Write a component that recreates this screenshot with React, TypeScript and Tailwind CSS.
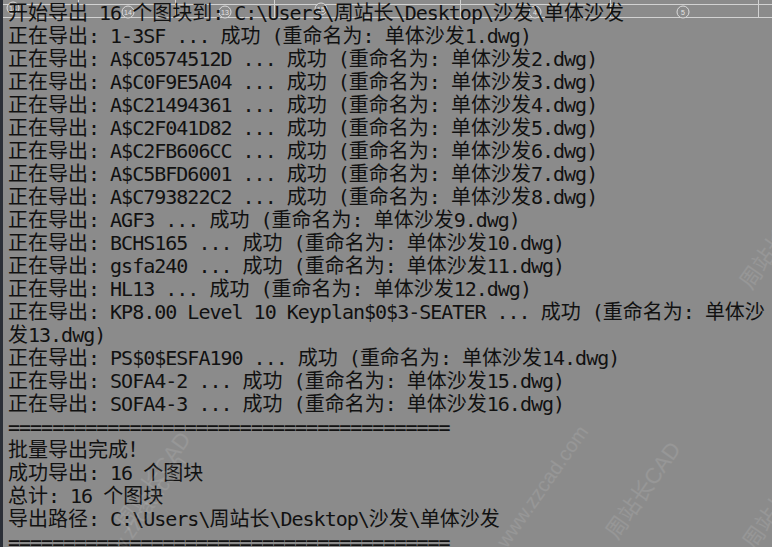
import type { ReactNode } from "react";

const lines: string[] = [
  "开始导出 16 个图块到: C:\\Users\\周站长\\Desktop\\沙发\\单体沙发",
  "正在导出: 1-3SF ... 成功 (重命名为: 单体沙发1.dwg)",
  "正在导出: A$C0574512D ... 成功 (重命名为: 单体沙发2.dwg)",
  "正在导出: A$C0F9E5A04 ... 成功 (重命名为: 单体沙发3.dwg)",
  "正在导出: A$C21494361 ... 成功 (重命名为: 单体沙发4.dwg)",
  "正在导出: A$C2F041D82 ... 成功 (重命名为: 单体沙发5.dwg)",
  "正在导出: A$C2FB606CC ... 成功 (重命名为: 单体沙发6.dwg)",
  "正在导出: A$C5BFD6001 ... 成功 (重命名为: 单体沙发7.dwg)",
  "正在导出: A$C793822C2 ... 成功 (重命名为: 单体沙发8.dwg)",
  "正在导出: AGF3 ... 成功 (重命名为: 单体沙发9.dwg)",
  "正在导出: BCHS165 ... 成功 (重命名为: 单体沙发10.dwg)",
  "正在导出: gsfa240 ... 成功 (重命名为: 单体沙发11.dwg)",
  "正在导出: HL13 ... 成功 (重命名为: 单体沙发12.dwg)",
  "正在导出: KP8.00 Level 10 Keyplan$0$3-SEATER ... 成功 (重命名为: 单体沙",
  "发13.dwg)",
  "正在导出: PS$0$ESFA190 ... 成功 (重命名为: 单体沙发14.dwg)",
  "正在导出: SOFA4-2 ... 成功 (重命名为: 单体沙发15.dwg)",
  "正在导出: SOFA4-3 ... 成功 (重命名为: 单体沙发16.dwg)",
  "========================================",
  "批量导出完成！",
  "成功导出: 16 个图块",
  "总计: 16 个图块",
  "导出路径: C:\\Users\\周站长\\Desktop\\沙发\\单体沙发",
  "========================================",
];

// ascii runs get tightened so they sit on an 11px grid like the console font
const renderLine = (s: string): ReactNode[] =>
  s
    .split(/([\x00-\x7f]+)/)
    .filter(Boolean)
    .map((part, i) =>
      /^[\x00-\x7f]/.test(part) ? (
        <span key={i} className="tracking-[-1px]">
          {part}
        </span>
      ) : (
        <span key={i}>{part}</span>
      )
    );

// the CAD drawing peeking through behind the console (grid lines + axis bubbles)
const GridStrip = () => (
  <svg
    className="absolute left-0 top-0 pointer-events-none"
    width="772"
    height="24"
    viewBox="0 0 772 24"
  >
    <g stroke="#d2d2d2" strokeWidth="1" fill="none">
      <line x1="0" y1="4.5" x2="772" y2="4.5" />
      <line x1="0" y1="17.5" x2="772" y2="17.5" />
      {[75, 172, 271, 457, 607, 755].map((x) => (
        <line key={x} x1={x + 0.5} y1="0" x2={x + 0.5} y2="18" />
      ))}
    </g>
    <g stroke="#dcdcdc" strokeWidth="1" fill="#8b8b8b">
      {[
        [10, 8, "14"],
        [125, 12, "14"],
        [222, 12, "13"],
        [318, 9, "15"],
        [532, 12, "4"],
        [680, 12, "5"],
      ].map(([x, y, t]) => (
        <g key={`${x}`}>
          <circle cx={x as number} cy={y as number} r="6" />
          <text
            x={x as number}
            y={(y as number) + 2.5}
            fontSize="7"
            textAnchor="middle"
            fill="#e4e4e4"
            stroke="none"
            fontFamily="Liberation Sans, sans-serif"
          >
            {t}
          </text>
        </g>
      ))}
    </g>
  </svg>
);

const Watermark = ({ text, className }: { text: string; className: string }) => (
  <div
    className={`absolute pointer-events-none whitespace-nowrap text-white/10 -rotate-[55deg] origin-left font-['Liberation_Sans','Noto_Sans_CJK_SC',sans-serif] ${className}`}
  >
    {text}
  </div>
);

export default function App() {
  return (
    <div className="relative w-[772px] h-[547px] overflow-hidden bg-[#8b8b8b] border-l-[3px] border-[#2b2f37]">
      <GridStrip />
      <div className="relative pt-[2px] pl-[5px] text-[20px] leading-[23px] text-[#111] whitespace-pre font-['DejaVu_Sans_Mono','Noto_Sans_CJK_SC',monospace]">
        {lines.map((l, i) => (
          <div key={i} className="h-[23px]">
            {renderLine(l)}
          </div>
        ))}
      </div>
      <Watermark text="周站长CAD" className="left-[118px] top-[510px] text-[22px]" />
      <Watermark text="www.zzcad.com" className="left-[96px] top-[560px] text-[20px]" />
      <Watermark text="周站长CAD" className="left-[608px] top-[520px] text-[22px]" />
      <Watermark text="www.zzcad.com" className="left-[498px] top-[530px] text-[20px]" />
      <Watermark text="周站长CAD" className="left-[742px] top-[270px] text-[22px]" />
      <Watermark text="周站长CAD" className="left-[745px] top-[530px] text-[22px]" />
    </div>
  );
}
